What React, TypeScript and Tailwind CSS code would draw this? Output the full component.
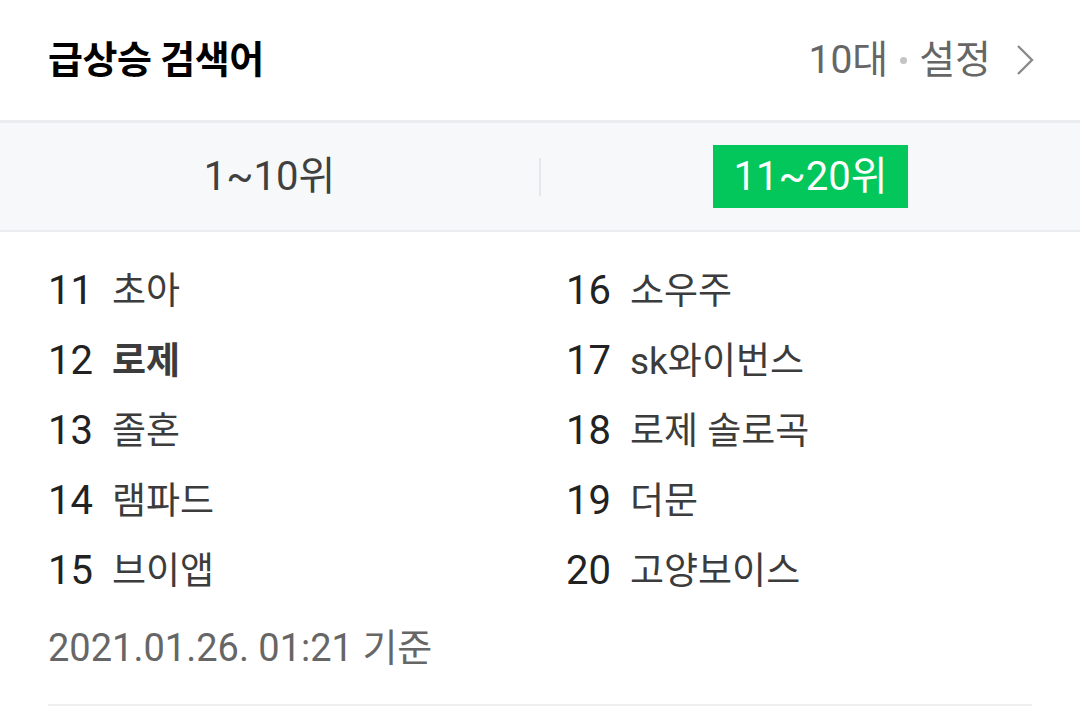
import React from 'react';

const left = [
  { rank: 11, word: '초아' },
  { rank: 12, word: '로제', bold: true },
  { rank: 13, word: '졸혼' },
  { rank: 14, word: '램파드' },
  { rank: 15, word: '브이앱' },
];

const right = [
  { rank: 16, word: '소우주' },
  { rank: 17, word: 'sk와이번스' },
  { rank: 18, word: '로제 솔로곡' },
  { rank: 19, word: '더문' },
  { rank: 20, word: '고양보이스' },
];

const font = { fontFamily: 'Roboto, "Noto Sans CJK KR", sans-serif' };

const Row: React.FC<{ rank: number; word: string; bold?: boolean }> = ({ rank, word, bold }) => (
  <div className="flex items-center h-[70px]">
    <span className="w-[64px] shrink-0 text-[40px] text-[#222] leading-none">{rank}</span>
    <span className={`text-[37px] leading-none text-[#3c3c3c] ${bold ? 'font-bold' : ''}`}>{word}</span>
  </div>
);

export default function App() {
  return (
    <div className="w-[1080px] h-[711px] bg-white overflow-hidden" style={font}>
      <div className="h-[123px] px-[48px] flex items-center justify-between border-b-[3px] border-[#ebecef]">
        <h2 className="text-[38px] font-bold text-black leading-none tracking-[-0.5px]">급상승 검색어</h2>
        <div className="flex items-center text-[39px] text-[#666] leading-none">
          <span>10대</span>
          <span className="mx-[12px] w-[7px] h-[7px] rounded-full bg-[#c4c4c4]" />
          <span>설정</span>
          <svg className="ml-[25px] mr-[-2px]" width="18" height="32" viewBox="0 0 18 32" fill="none">
            <path d="M2 2 L16 16 L2 30" stroke="#8a8a8a" strokeWidth="2.4" />
          </svg>
        </div>
      </div>

      <div className="h-[109px] bg-[#f7f8fa] flex items-center border-b-[2px] border-[#ebecef]">
        <div className="flex-1 flex justify-center">
          <span className="text-[40px] text-[#404040] leading-none">1~10위</span>
        </div>
        <div className="w-[2px] h-[38px] bg-[#e6e7ea]" />
        <div className="flex-1 flex justify-center">
          <span className="w-[195px] h-[63px] flex items-center justify-center bg-[#03c75a] text-white text-[40px] leading-none">
            11~20위
          </span>
        </div>
      </div>

      <div className="px-[48px] pt-[24px] grid grid-cols-2 grid-rows-5 grid-flow-col gap-x-[52px]">
        {left.map((r) => (
          <Row key={r.rank} {...r} />
        ))}
        {right.map((r) => (
          <Row key={r.rank} {...r} />
        ))}
      </div>

      <div className="mx-[48px] mt-[3px] h-[97px] pb-[18px] border-b-[2px] border-[#f0f0f2] flex items-center">
        <span className="text-[38px] text-[#666] leading-none">2021.01.26. 01:21 기준</span>
      </div>
    </div>
  );
}
